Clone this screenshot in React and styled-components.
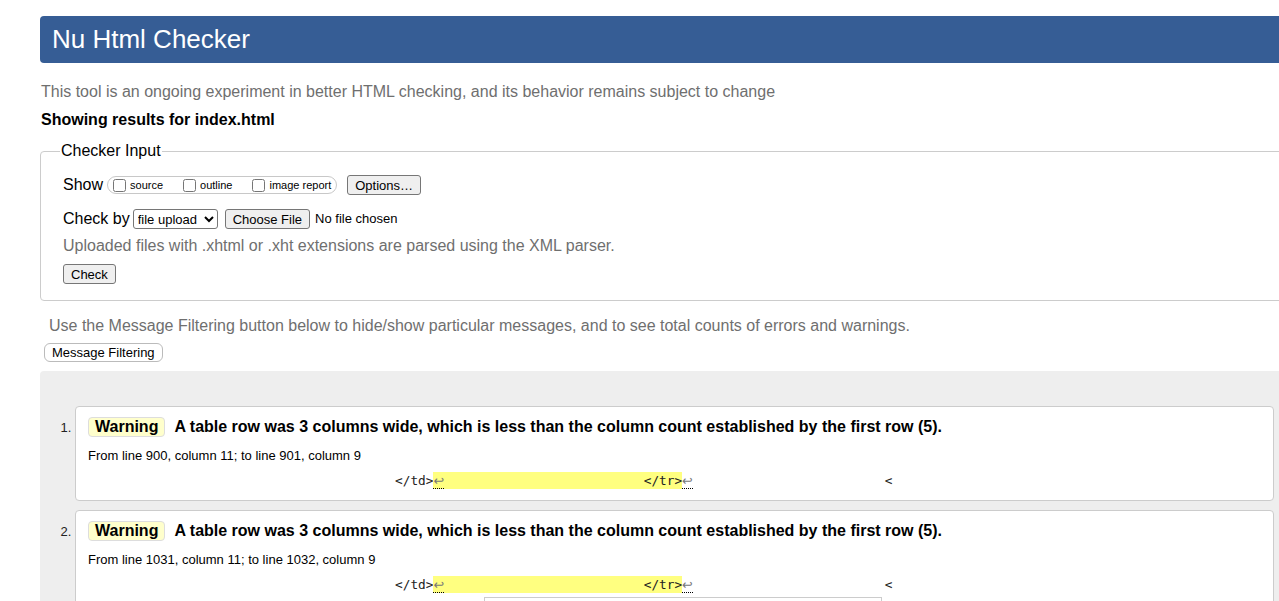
import React from "react";
import styled, { createGlobalStyle } from "styled-components";

const GlobalStyle = createGlobalStyle`
  html, body {
    margin: 0;
    padding: 0;
    background: #fff;
    overflow: hidden;
  }
  body {
    font-family: "Liberation Sans", Arial, sans-serif;
    color: #000;
  }
`;

const Page = styled.div`
  width: 1300px;
  padding: 16px 0 0 40px;
`;

const Banner = styled.h1`
  margin: 0;
  height: 47px;
  padding-left: 12px;
  background: #365d95;
  border-radius: 4px;
  color: #fff;
  font-size: 26px;
  font-weight: normal;
  line-height: 47px;
`;

const Intro = styled.p`
  margin: ${(p) => p.$top || 0}px 0 0 ${(p) => p.$left || 0}px;
  font-size: 16px;
  line-height: 18px;
  color: #6f6f6f;
`;

const ResultsFor = styled.p`
  margin: 10px 0 0 1px;
  font-size: 16px;
  line-height: 18px;
  font-weight: bold;
`;

const InputBox = styled.fieldset`
  margin: 13px 0 0;
  padding: 15px 0 16px 22px;
  border: 1px solid #cccccc;
  border-radius: 4px;
  min-width: 0;
`;

const Legend = styled.legend`
  margin-left: -3px;
  padding: 0 1px;
  font-size: 16px;
  line-height: 18px;
`;

const Row = styled.div`
  display: flex;
  align-items: center;
  height: 20px;
  margin-top: ${(p) => p.$top || 0}px;
  font-size: 16px;
  line-height: 18px;
`;

const Pill = styled.div`
  display: flex;
  align-items: center;
  gap: 20px;
  box-sizing: border-box;
  height: 18px;
  margin-left: 4px;
  padding: 0 5px;
  border: 1px solid #c8c8c8;
  border-radius: 9px;
`;

const Option = styled.label`
  display: flex;
  align-items: center;
  gap: 4px;
  font-size: 11px;
`;

const Box = styled.input`
  margin: 0;
  width: 13px;
  height: 13px;
`;

const GrayButton = styled.button`
  display: ${(p) => (p.$block ? "block" : "inline-block")};
  box-sizing: border-box;
  height: 20px;
  margin: ${(p) => p.$top || 0}px 0 0 ${(p) => p.$left || 0}px;
  padding: 0 7px;
  border: 1px solid #767676;
  border-radius: 3px;
  background: #efefef;
  color: #000;
  font-family: "Liberation Sans", Arial, sans-serif;
  font-size: 13px;
`;

const Select = styled.select`
  box-sizing: border-box;
  width: 85px;
  height: 20px;
  margin-left: 3px;
  padding: 0;
  border: 1px solid #767676;
  border-radius: 3px;
  background: #fff;
  color: #000;
  font-family: "Liberation Sans", Arial, sans-serif;
  font-size: 13px;
`;

const FileName = styled.span`
  margin-left: 5px;
  font-size: 13px;
`;

const FilterButton = styled.button`
  display: block;
  box-sizing: border-box;
  height: 19px;
  margin: 8px 0 0 4px;
  padding: 0 7px;
  border: 1px solid #bbbbbb;
  border-radius: 6px;
  background: #fff;
  color: #000;
  font-family: "Liberation Sans", Arial, sans-serif;
  font-size: 13px;
`;

const Results = styled.div`
  margin-top: 9px;
  padding: 35px 66px 40px 35px;
  background: #eeeeee;
  border-radius: 4px 0 0 0;
`;

const List = styled.ol`
  margin: 0;
  padding: 0;
`;

const Card = styled.li`
  padding: 10px 12px;
  background: #fff;
  border: 1px solid #cccccc;
  border-radius: 4px;
  font-size: 13px;
  line-height: 17px;

  & + & {
    margin-top: 9px;
  }

  &::marker {
    color: #222;
  }
`;

const Head = styled.p`
  margin: 0;
  font-size: 16px;
  font-weight: bold;
  line-height: 20px;
`;

const Badge = styled.span`
  display: inline-block;
  margin-right: 9px;
  padding: 0 6px;
  border: 1px solid #dddddd;
  border-radius: 4px;
  background: #ffffcc;
  line-height: 18px;
`;

const Location = styled.p`
  margin: 10px 0 0;
  font-size: 13px;
  line-height: 17px;
`;

const Extract = styled.p`
  margin: 8px 0 0;
  font-family: "DejaVu Sans Mono", "Liberation Mono", monospace;
  font-size: 12.75px;
  line-height: 18px;
  white-space: pre;
  color: #222;
`;

const Mark = styled.mark`
  padding: 1px 0;
  background: #ffff80;
  color: inherit;
`;

const Lf = styled.span`
  padding: 1px 0 0;
  border-bottom: 1px dotted #000;
  font-family: "DejaVu Sans", sans-serif;
  color: #777;
`;

const ExtractFrame = styled.div`
  box-sizing: border-box;
  width: 398px;
  height: 30px;
  margin: 3px 0 0 396px;
  border: 1px solid #cccccc;
`;

const messages = [
  { from: "From line 900, column 11; to line 901, column 9", frame: false },
  { from: "From line 1031, column 11; to line 1032, column 9", frame: true },
];

const lead = " ".repeat(40);
const gap = " ".repeat(26);
const tail = " ".repeat(25);

export default function App() {
  return (
    <>
      <GlobalStyle />
      <Page>
        <Banner>Nu Html Checker</Banner>
        <Intro $top={20} $left={1}>
          This tool is an ongoing experiment in better HTML checking, and its behavior remains subject to change
        </Intro>
        <ResultsFor>Showing results for index.html</ResultsFor>

        <InputBox>
          <Legend>Checker Input</Legend>
          <Row>
            Show
            <Pill>
              <Option>
                <Box type="checkbox" />
                source
              </Option>
              <Option>
                <Box type="checkbox" />
                outline
              </Option>
              <Option>
                <Box type="checkbox" />
                image report
              </Option>
            </Pill>
            <GrayButton $left={10}>Options…</GrayButton>
          </Row>
          <Row $top={14}>
            Check by
            <Select defaultValue="file">
              <option value="address">address</option>
              <option value="file">file upload</option>
              <option value="text">text input</option>
            </Select>
            <GrayButton $left={7}>Choose File</GrayButton>
            <FileName>No file chosen</FileName>
          </Row>
          <Intro $top={8}>Uploaded files with .xhtml or .xht extensions are parsed using the XML parser.</Intro>
          <GrayButton $block $top={9}>Check</GrayButton>
        </InputBox>

        <Intro $top={16} $left={9}>
          Use the Message Filtering button below to hide/show particular messages, and to see total counts of errors and warnings.
        </Intro>
        <FilterButton>Message Filtering</FilterButton>

        <Results>
          <List>
            {messages.map((m) => (
              <Card key={m.from}>
                <Head>
                  <Badge>Warning</Badge>
                  A table row was 3 columns wide, which is less than the column count established by the first row (5).
                </Head>
                <Location>{m.from}</Location>
                <Extract>
                  {lead}
                  {"</td>"}
                  <Mark>
                    <Lf>↩</Lf>
                    {gap}
                    {"</tr>"}
                  </Mark>
                  <Lf>↩</Lf>
                  {tail}
                  {"<"}
                </Extract>
                {m.frame && <ExtractFrame />}
              </Card>
            ))}
          </List>
        </Results>
      </Page>
    </>
  );
}
